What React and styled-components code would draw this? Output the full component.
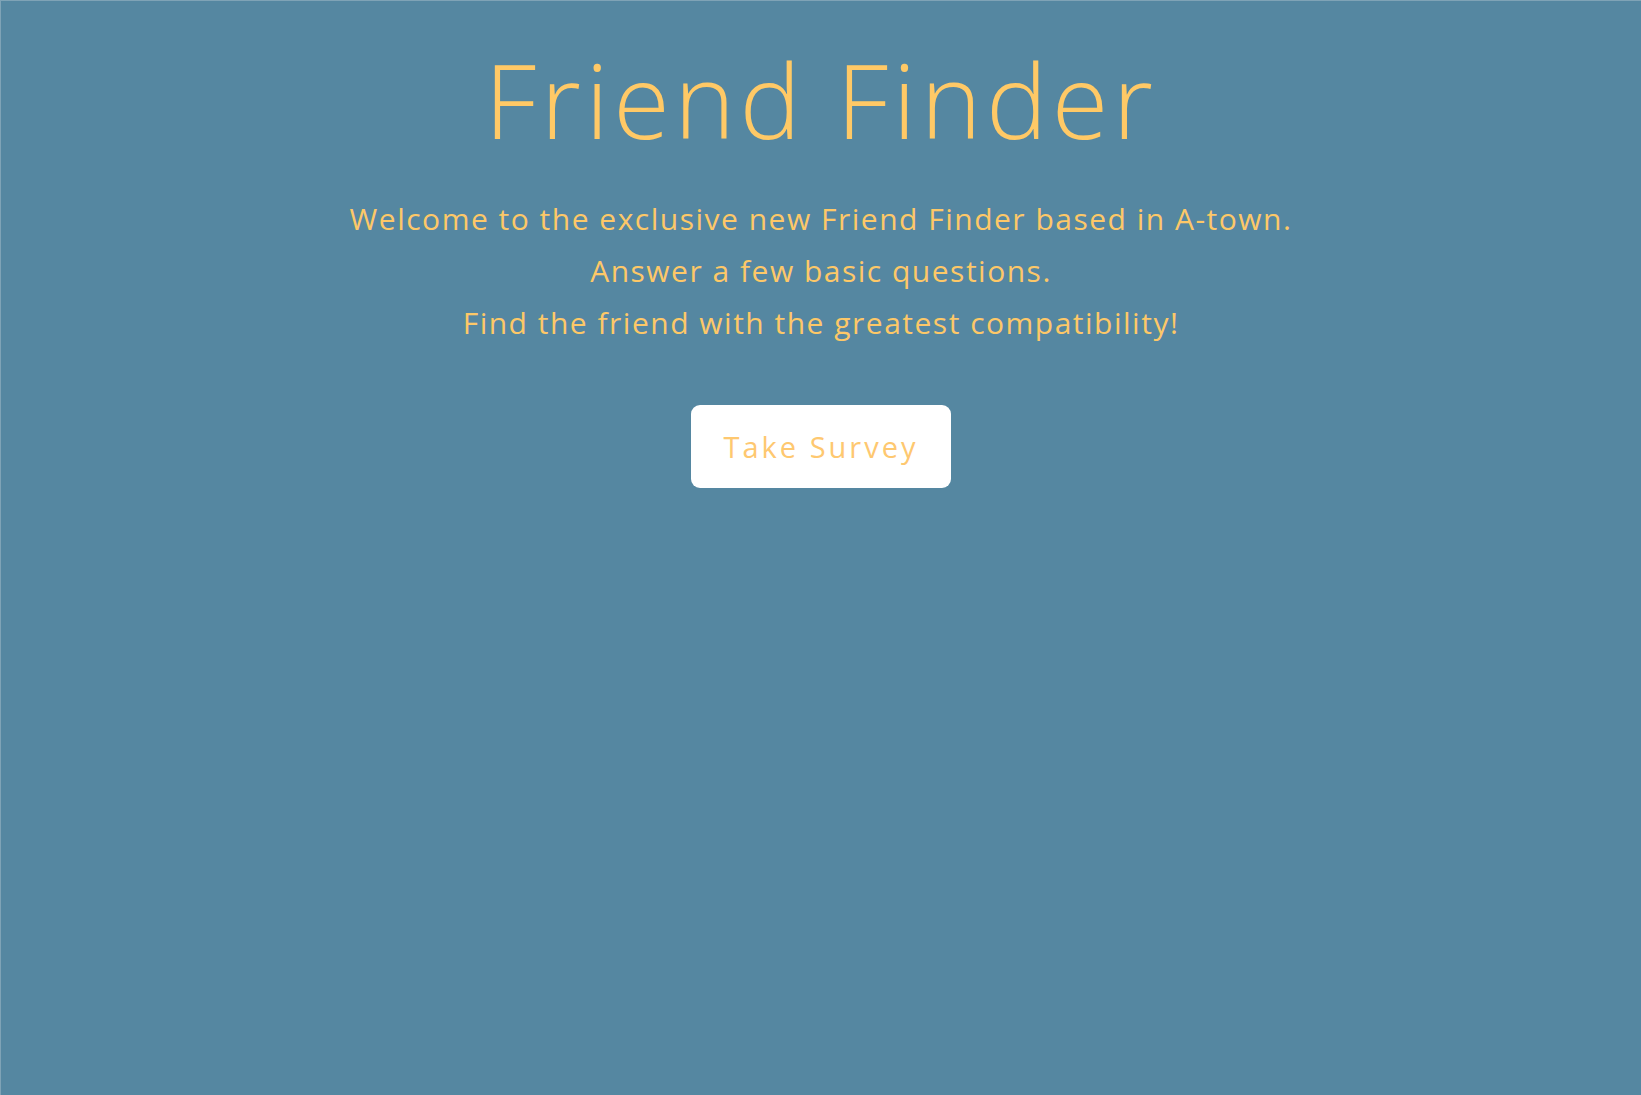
import React from "react";
import styled, { createGlobalStyle } from "styled-components";

const GlobalStyle = createGlobalStyle`
  html, body {
    margin: 0;
    padding: 0;
    background: #5587a1;
  }
  body {
    font-family: "Open Sans", "DejaVu Sans", sans-serif;
  }
`;

const Page = styled.div`
  min-height: 100vh;
  display: flex;
  flex-direction: column;
  align-items: center;
  padding-top: 47px;
  box-sizing: border-box;
  background: #5587a1;
  border-top: 1px solid #7fa3b6;
  border-left: 1px solid #7fa3b6;
`;

const Title = styled.h1`
  margin: 0;
  font-size: 103px;
  line-height: 102px;
  font-weight: 300;
  color: #ffc966;
  letter-spacing: 4.5px;
`;

const Intro = styled.div`
  margin-top: 43px;
  text-align: center;
`;

const Line = styled.p`
  margin: 0;
  font-size: 30px;
  line-height: 52px;
  font-weight: 400;
  letter-spacing: 1.5px;
  color: #fdc868;
`;

const SurveyButton = styled.button`
  margin-top: 56px;
  width: 260px;
  height: 83px;
  border: none;
  border-radius: 9px;
  background: #ffffff;
  color: #fec870;
  font-family: "Open Sans", "DejaVu Sans", sans-serif;
  font-size: 29px;
  font-weight: 400;
  letter-spacing: 3px;
  cursor: pointer;
`;

function App() {
  return (
    <>
      <GlobalStyle />
      <Page>
        <Title>Friend Finder</Title>
        <Intro>
          <Line>Welcome to the exclusive new Friend Finder based in A-town.</Line>
          <Line>Answer a few basic questions.</Line>
          <Line>Find the friend with the greatest compatibility!</Line>
        </Intro>
        <SurveyButton>Take Survey</SurveyButton>
      </Page>
    </>
  );
}

export default App;
